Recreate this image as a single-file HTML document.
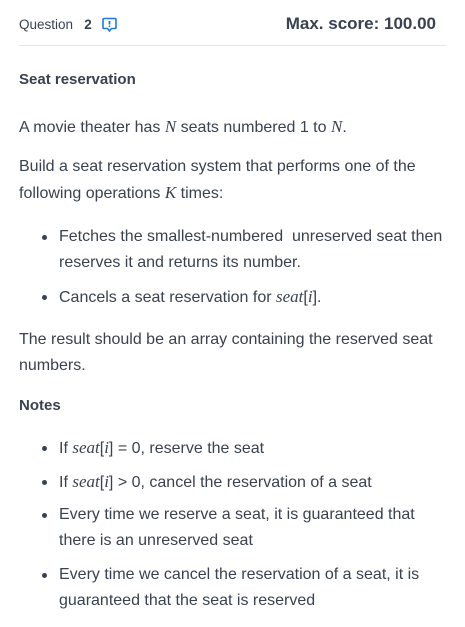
<!DOCTYPE html>
<html><head><style>
body{margin:0;width:465px;height:627px;background:#fff;font-family:"Liberation Sans",sans-serif;color:#39424e;position:relative;overflow:hidden}
.l{position:absolute;left:19px;font-size:16px;line-height:20px;white-space:nowrap}
.b{left:59px}
.d{position:absolute;left:42px;width:5px;height:5px;border-radius:50%;background:#39424e}
i.m{font-family:"Liberation Serif",serif;font-size:17px}
</style></head><body>
<div class="l" style="top:15px;font-size:13.5px">Question&nbsp;&nbsp;&nbsp;<b>2</b></div>
<svg style="position:absolute;left:102px;top:17px" width="15" height="16" viewBox="0 0 15 16"><path d="M2 1.5h11a1 1 0 0 1 1 1v8a1 1 0 0 1-1 1H9.5L7.5 14 5.5 11.5H2a1 1 0 0 1-1-1v-8a1 1 0 0 1 1-1z" fill="none" stroke="#1f7ae0" stroke-width="1.6"/><path d="M7.5 4v3.5" stroke="#1f7ae0" stroke-width="1.8"/><circle cx="7.5" cy="9.2" r="0.9" fill="#1f7ae0"/></svg>
<div class="l" style="top:14px;left:auto;right:29px;font-size:17px;font-weight:bold">Max. score: 100.00</div>
<div style="position:absolute;left:19px;top:45px;width:427px;height:1px;background:#e4e6e8"></div>
<div class="l" style="top:70px;font-weight:bold;font-size:15px">Seat reservation</div>
<div class="l" style="top:117px">A movie theater has <i class="m">N</i> seats numbered 1 to <i class="m">N</i>.</div>
<div class="l" style="top:157px">Build a seat reservation system that performs one of the</div>
<div class="l" style="top:183px">following operations <i class="m">K</i> times:</div>
<div class="d" style="top:235px"></div>
<div class="l b" style="top:227px">Fetches the smallest-numbered&nbsp; unreserved seat then</div>
<div class="l b" style="top:253px">reserves it and returns its number.</div>
<div class="d" style="top:295px"></div>
<div class="l b" style="top:287px">Cancels a seat reservation for <i class="m">seat</i>[<i class="m">i</i>].</div>
<div class="l" style="top:330px">The result should be an array containing the reserved seat</div>
<div class="l" style="top:356px">numbers.</div>
<div class="l" style="top:396px;font-weight:bold;font-size:15px">Notes</div>
<div class="d" style="top:446px"></div>
<div class="l b" style="top:438px">If <i class="m">seat</i>[<i class="m">i</i>] = 0, reserve the seat</div>
<div class="d" style="top:480px"></div>
<div class="l b" style="top:472px">If <i class="m">seat</i>[<i class="m">i</i>] &gt; 0, cancel the reservation of a seat</div>
<div class="d" style="top:513px"></div>
<div class="l b" style="top:505px">Every time we reserve a seat, it is guaranteed that</div>
<div class="l b" style="top:531px">there is an unreserved seat</div>
<div class="d" style="top:573px"></div>
<div class="l b" style="top:565px">Every time we cancel the reservation of a seat, it is</div>
<div class="l b" style="top:591px">guaranteed that the seat is reserved</div>
</body></html>
